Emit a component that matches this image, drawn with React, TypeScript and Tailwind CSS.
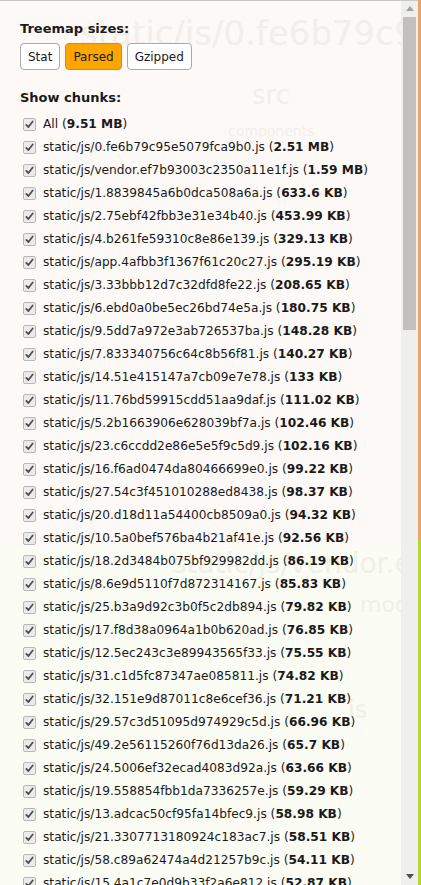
import React from "react";

const chunks: [string, string][] = [
  ["static/js/0.fe6b79c95e5079fca9b0.js", "2.51 MB"],
  ["static/js/vendor.ef7b93003c2350a11e1f.js", "1.59 MB"],
  ["static/js/1.8839845a6b0dca508a6a.js", "633.6 KB"],
  ["static/js/2.75ebf42fbb3e31e34b40.js", "453.99 KB"],
  ["static/js/4.b261fe59310c8e86e139.js", "329.13 KB"],
  ["static/js/app.4afbb3f1367f61c20c27.js", "295.19 KB"],
  ["static/js/3.33bbb12d7c32dfd8fe22.js", "208.65 KB"],
  ["static/js/6.ebd0a0be5ec26bd74e5a.js", "180.75 KB"],
  ["static/js/9.5dd7a972e3ab726537ba.js", "148.28 KB"],
  ["static/js/7.833340756c64c8b56f81.js", "140.27 KB"],
  ["static/js/14.51e415147a7cb09e7e78.js", "133 KB"],
  ["static/js/11.76bd59915cdd51aa9daf.js", "111.02 KB"],
  ["static/js/5.2b1663906e628039bf7a.js", "102.46 KB"],
  ["static/js/23.c6ccdd2e86e5e5f9c5d9.js", "102.16 KB"],
  ["static/js/16.f6ad0474da80466699e0.js", "99.22 KB"],
  ["static/js/27.54c3f451010288ed8438.js", "98.37 KB"],
  ["static/js/20.d18d11a54400cb8509a0.js", "94.32 KB"],
  ["static/js/10.5a0bef576ba4b21af41e.js", "92.56 KB"],
  ["static/js/18.2d3484b075bf929982dd.js", "86.19 KB"],
  ["static/js/8.6e9d5110f7d872314167.js", "85.83 KB"],
  ["static/js/25.b3a9d92c3b0f5c2db894.js", "79.82 KB"],
  ["static/js/17.f8d38a0964a1b0b620ad.js", "76.85 KB"],
  ["static/js/12.5ec243c3e89943565f33.js", "75.55 KB"],
  ["static/js/31.c1d5fc87347ae085811.js", "74.82 KB"],
  ["static/js/32.151e9d87011c8e6cef36.js", "71.21 KB"],
  ["static/js/29.57c3d51095d974929c5d.js", "66.96 KB"],
  ["static/js/49.2e56115260f76d13da26.js", "65.7 KB"],
  ["static/js/24.5006ef32ecad4083d92a.js", "63.66 KB"],
  ["static/js/19.558854fbb1da7336257e.js", "59.29 KB"],
  ["static/js/13.adcac50cf95fa14bfec9.js", "58.98 KB"],
  ["static/js/21.3307713180924c183ac7.js", "58.51 KB"],
  ["static/js/58.c89a62474a4d21257b9c.js", "54.11 KB"],
  ["static/js/15.4a1c7e0d9b33f2a6e812.js", "52.87 KB"],
];

function Check() {
  return (
    <span className="w-[13px] h-[13px] shrink-0 rounded-[2px] border border-[#b8b8b8] bg-[#ebebeb] flex items-center justify-center">
      <svg width="9" height="9" viewBox="0 0 9 9">
        <path d="M1.3 4.9 L3.4 7 L7.7 1.5" fill="none" stroke="#505050" strokeWidth="1.8" strokeLinecap="round" strokeLinejoin="round" />
      </svg>
    </span>
  );
}

function Row({ name, size }: { name: string; size: string }) {
  return (
    <div className="h-[23px] flex items-center gap-[7px] pl-[3px] whitespace-nowrap text-[12.2px]">
      <Check />
      <span>
        {name} (<b className="font-bold">{size}</b>)
      </span>
    </div>
  );
}

export default function App() {
  return (
    <div
      className="relative w-[421px] h-[885px] overflow-hidden flex text-[13px] text-[#1a1a1a]"
      style={{ fontFamily: '"DejaVu Sans", Verdana, sans-serif' }}
    >
      <div className="absolute left-0 top-0 w-[418px] h-px bg-[#c8c8c8] z-10" />
      <div className="relative flex-1 h-full bg-[#fdf9f6] overflow-hidden">
        {/* faint treemap labels behind the sidebar */}
        <div className="absolute left-[0px] top-[545px] w-[401px] h-[340px] bg-[#fbfcf4]" />
        <div className="absolute left-[80px] top-[16px] text-[34px] text-[#f2eeeb] whitespace-nowrap leading-none">
          static/js/0.fe6b79c95
        </div>
        <div className="absolute left-[252px] top-[82px] text-[26px] text-[#f2eeeb] leading-none">src</div>
        <div className="absolute left-[228px] top-[124px] text-[14px] text-[#f2eeeb] leading-none">components</div>
        <div className="absolute left-[172px] top-[550px] text-[28px] text-[#eff0e8] whitespace-nowrap leading-none">
          static/js/vendor.ef7b9300
        </div>
        <div className="absolute left-[360px] top-[594px] text-[22px] text-[#eff0e8] leading-none">modul</div>
        <div className="absolute left-[348px] top-[698px] text-[24px] text-[#eff0e8] leading-none">is</div>

        <div className="relative pl-[20px] pt-[21px]">
          <div className="font-bold leading-[16px]">Treemap sizes:</div>
          <div className="flex gap-[5px] mt-[6px]">
            <button className="h-[27px] px-[7px] border border-[#aaa] rounded-[4px] bg-white text-[12px] leading-none">Stat</button>
            <button className="h-[27px] px-[7px] border border-[#d98c00] rounded-[4px] bg-[#ffa500] text-[12px] leading-none">Parsed</button>
            <button className="h-[27px] px-[7px] border border-[#aaa] rounded-[4px] bg-white text-[12px] leading-none">Gzipped</button>
          </div>
          <div className="font-bold leading-[16px] mt-[20px]">Show chunks:</div>
          <div className="mt-[7px]">
            <Row name="All" size="9.51 MB" />
            {chunks.map(([n, s]) => (
              <Row key={n} name={n} size={s} />
            ))}
          </div>
        </div>
      </div>
      {/* scrollbar */}
      <div className="w-[17px] h-full bg-[#efefec] flex flex-col items-center">
        <div className="h-[17px] flex items-center justify-center">
          <svg width="8" height="5" viewBox="0 0 8 5"><path d="M0 5 L4 0 L8 5 Z" fill="#a3a3a3" /></svg>
        </div>
        <div className="w-[13px] h-[313px] bg-[#c2c0bd]" />
        <div className="flex-1" />
        <div className="h-[17px] flex items-center justify-center">
          <svg width="8" height="5" viewBox="0 0 8 5"><path d="M0 0 L8 0 L4 5 Z" fill="#505050" /></svg>
        </div>
      </div>
      <div className="w-[3px] h-full flex flex-col">
        <div className="h-[540px] bg-[#e9a46a]" />
        <div className="flex-1 bg-[#b6d33a]" />
      </div>
    </div>
  );
}
